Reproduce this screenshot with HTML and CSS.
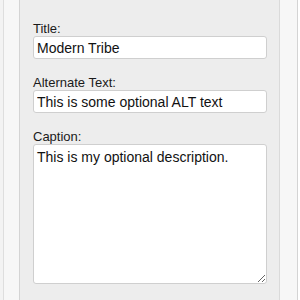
FILE: index.html
```html
<!DOCTYPE html>
<html lang="en">
<head>
    <meta charset="UTF-8">
    <meta name="viewport" content="width=device-width, initial-scale=1.0">
    <title>Image Details</title>
    <link rel="stylesheet" href="styles.css">
</head>
<body>
    <div class="frame">
        <div class="edge"></div>
        <div class="gutter"></div>
        <div class="panel">
            <form class="details">
                <label for="title">Title:</label>
                <input type="text" id="title" name="title" value="Modern Tribe">

                <label for="alt">Alternate Text:</label>
                <input type="text" id="alt" name="alt" value="This is some optional ALT text">

                <label for="caption">Caption:</label>
                <textarea id="caption" name="caption">This is my optional description.</textarea>
            </form>
        </div>
        <div class="gutter gutter-right"></div>
        <div class="edge-right"></div>
    </div>
</body>
</html>
```

FILE: styles.css
```css
html, body {
    margin: 0;
    padding: 0;
    height: 100%;
}
body {
    font-family: "Liberation Sans", Arial, sans-serif;
    background-color: #fff;
    color: #222;
}
.frame {
    display: flex;
    height: 300px;
}
.edge {
    width: 3px;
    background-color: #f3f3f3;
    border-right: 1px solid #dedede;
}
.gutter {
    width: 15px;
    background-color: #f7f7f7;
    border-right: 1px solid #d4d4d4;
}
.gutter-right {
    width: 17px;
    border-right: 1px solid #d4d4d4;
    border-left: 1px solid #dadada;
}
.edge-right {
    width: 2px;
    background-color: #fff;
}
.panel {
    width: 259px;
    background-color: #ededed;
    padding: 21px 12px 0 13px;
    box-sizing: border-box;
}
.details label {
    display: block;
    font-size: 13px;
    line-height: 15px;
    margin-bottom: 0;
    color: #1a1a1a;
}
.details input,
.details textarea {
    display: block;
    width: 100%;
    box-sizing: border-box;
    border: 1px solid #cfcfcf;
    border-radius: 3px;
    background-color: #fff;
    font-family: "Liberation Sans", Arial, sans-serif;
    font-size: 14px;
    color: #111;
    padding: 3px 3px;
    margin: 0 0 16px;
}
.details input {
    height: 23px;
}
.details textarea {
    height: 140px;
    padding: 4px 3px;
    resize: vertical;
}
```
